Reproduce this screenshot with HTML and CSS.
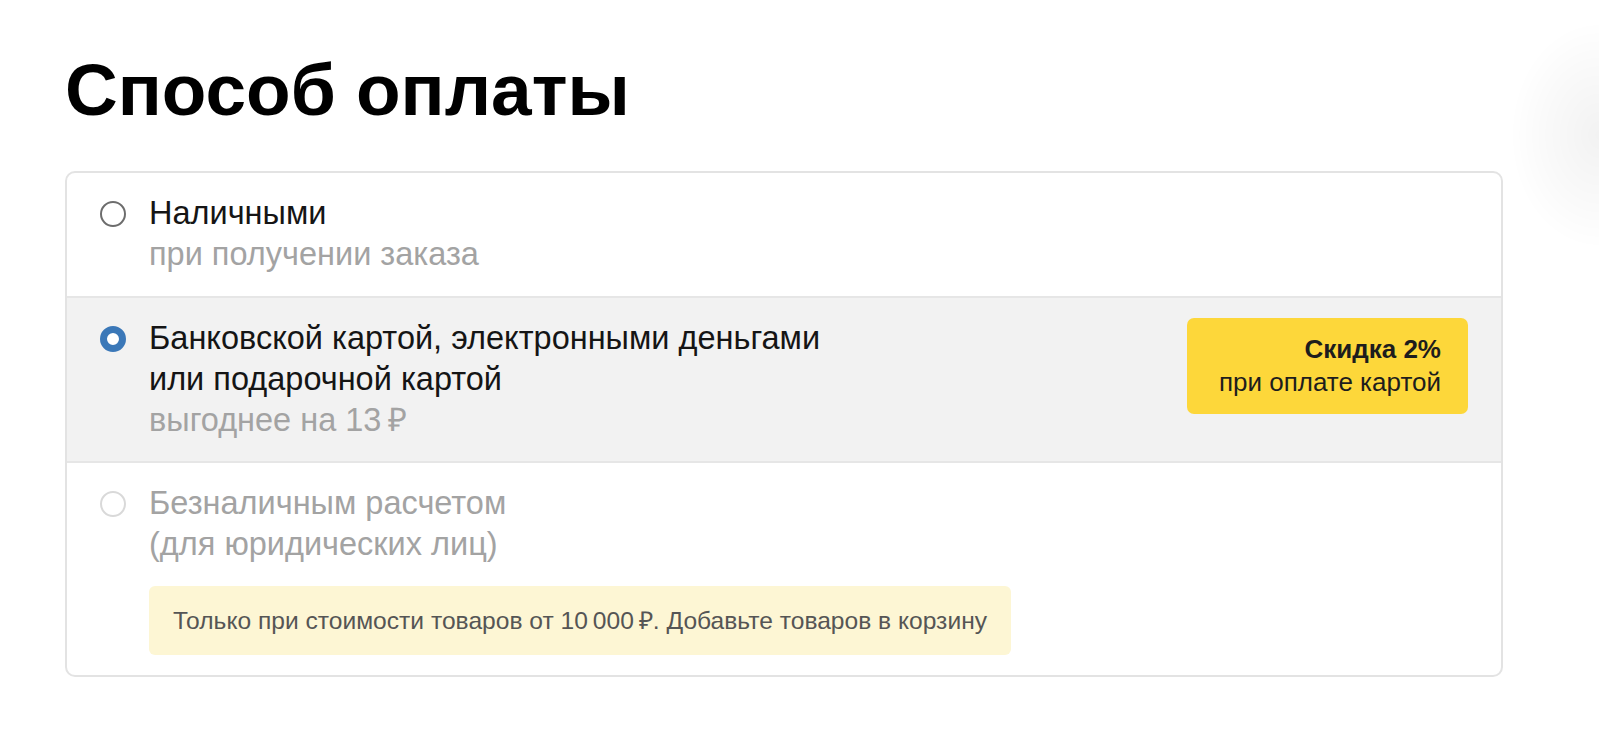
FILE: index.html
```html
<!DOCTYPE html>
<html lang="ru">
  <head>
    <meta charset="UTF-8" />
    <meta name="viewport" content="width=device-width, initial-scale=1.0" />
    <title>Способ оплаты</title>
    <link rel="stylesheet" href="styles.css">
  </head>
  <body>
    <div class="page">
      <h1 class="title">Способ оплаты</h1>

      <div class="payment">
        <label class="option">
          <span class="radio"></span>
          <div class="option-text">
            <div class="option-name">Наличными</div>
            <div class="option-note">при получении заказа</div>
          </div>
        </label>

        <label class="option selected">
          <span class="radio checked"></span>
          <div class="option-text">
            <div class="option-name">Банковской картой, электронными деньгами<br>или подарочной картой</div>
            <div class="option-note">выгоднее на 13&thinsp;₽</div>
          </div>
          <div class="discount">
            <b>Скидка 2%</b>
            <span>при оплате картой</span>
          </div>
        </label>

        <label class="option disabled">
          <span class="radio"></span>
          <div class="option-text">
            <div class="option-name">Безналичным расчетом<br>(для юридических лиц)</div>
            <div class="notice">Только при стоимости товаров от 10&thinsp;000&thinsp;₽. Добавьте товаров в корзину</div>
          </div>
        </label>
      </div>
    </div>
    <div class="edge-shadow"></div>
  </body>
</html>
```

FILE: styles.css
```css
* {
  margin: 0;
  padding: 0;
  box-sizing: border-box;
}

body {
  font-family: "Liberation Sans", Arial, sans-serif;
  background: #fff;
  color: #111;
  overflow: hidden;
}

.page {
  padding: 44px 96px 0 65px;
}

.title {
  font-size: 73px;
  font-weight: bold;
  line-height: 92px;
  color: #000;
  margin-bottom: 35px;
}

.payment {
  width: 1438px;
  border: 2px solid #e3e3e3;
  border-radius: 10px;
  overflow: hidden;
}

.option {
  display: flex;
  align-items: flex-start;
  padding: 20px 33px 20px 33px;
  border-top: 2px solid #e6e6e6;
}

.option:first-child {
  border-top: none;
  padding-bottom: 21px;
}

.option.selected {
  background: #f2f2f2;
  padding-bottom: 20px;
}

.radio {
  flex: none;
  width: 26px;
  height: 26px;
  margin-top: 8px;
  margin-right: 23px;
  border: 2px solid #6d6d6d;
  border-radius: 50%;
  background: #fff;
}

.radio.checked {
  border: 7px solid #3b78b8;
}

.disabled .radio {
  border-color: #d9d9d9;
}

.option-text {
  flex: 1;
  font-size: 32.5px;
  line-height: 41px;
}

.option-name {
  color: #151515;
}

.option-note {
  color: #a3a3a3;
}

.disabled .option-name {
  color: #a3a3a3;
}

.discount {
  flex: none;
  width: 281px;
  height: 96px;
  padding: 15px 27px 0 0;
  background: #fdd73a;
  border-radius: 7px;
  text-align: right;
  font-size: 26px;
  line-height: 33px;
  color: #1d1d1d;
}

.discount b,
.discount span {
  display: block;
}

.notice {
  margin-top: 21px;
  width: 862px;
  height: 69px;
  padding: 0 24px;
  background: #fdf6d4;
  border-radius: 6px;
  font-size: 24.6px;
  line-height: 69px;
  color: #555;
  white-space: nowrap;
}

.edge-shadow {
  position: fixed;
  top: 20px;
  right: -90px;
  width: 180px;
  height: 230px;
  background: radial-gradient(ellipse at center, rgba(0, 0, 0, 0.05) 0%, rgba(0, 0, 0, 0.02) 45%, rgba(0, 0, 0, 0) 70%);
}
```
